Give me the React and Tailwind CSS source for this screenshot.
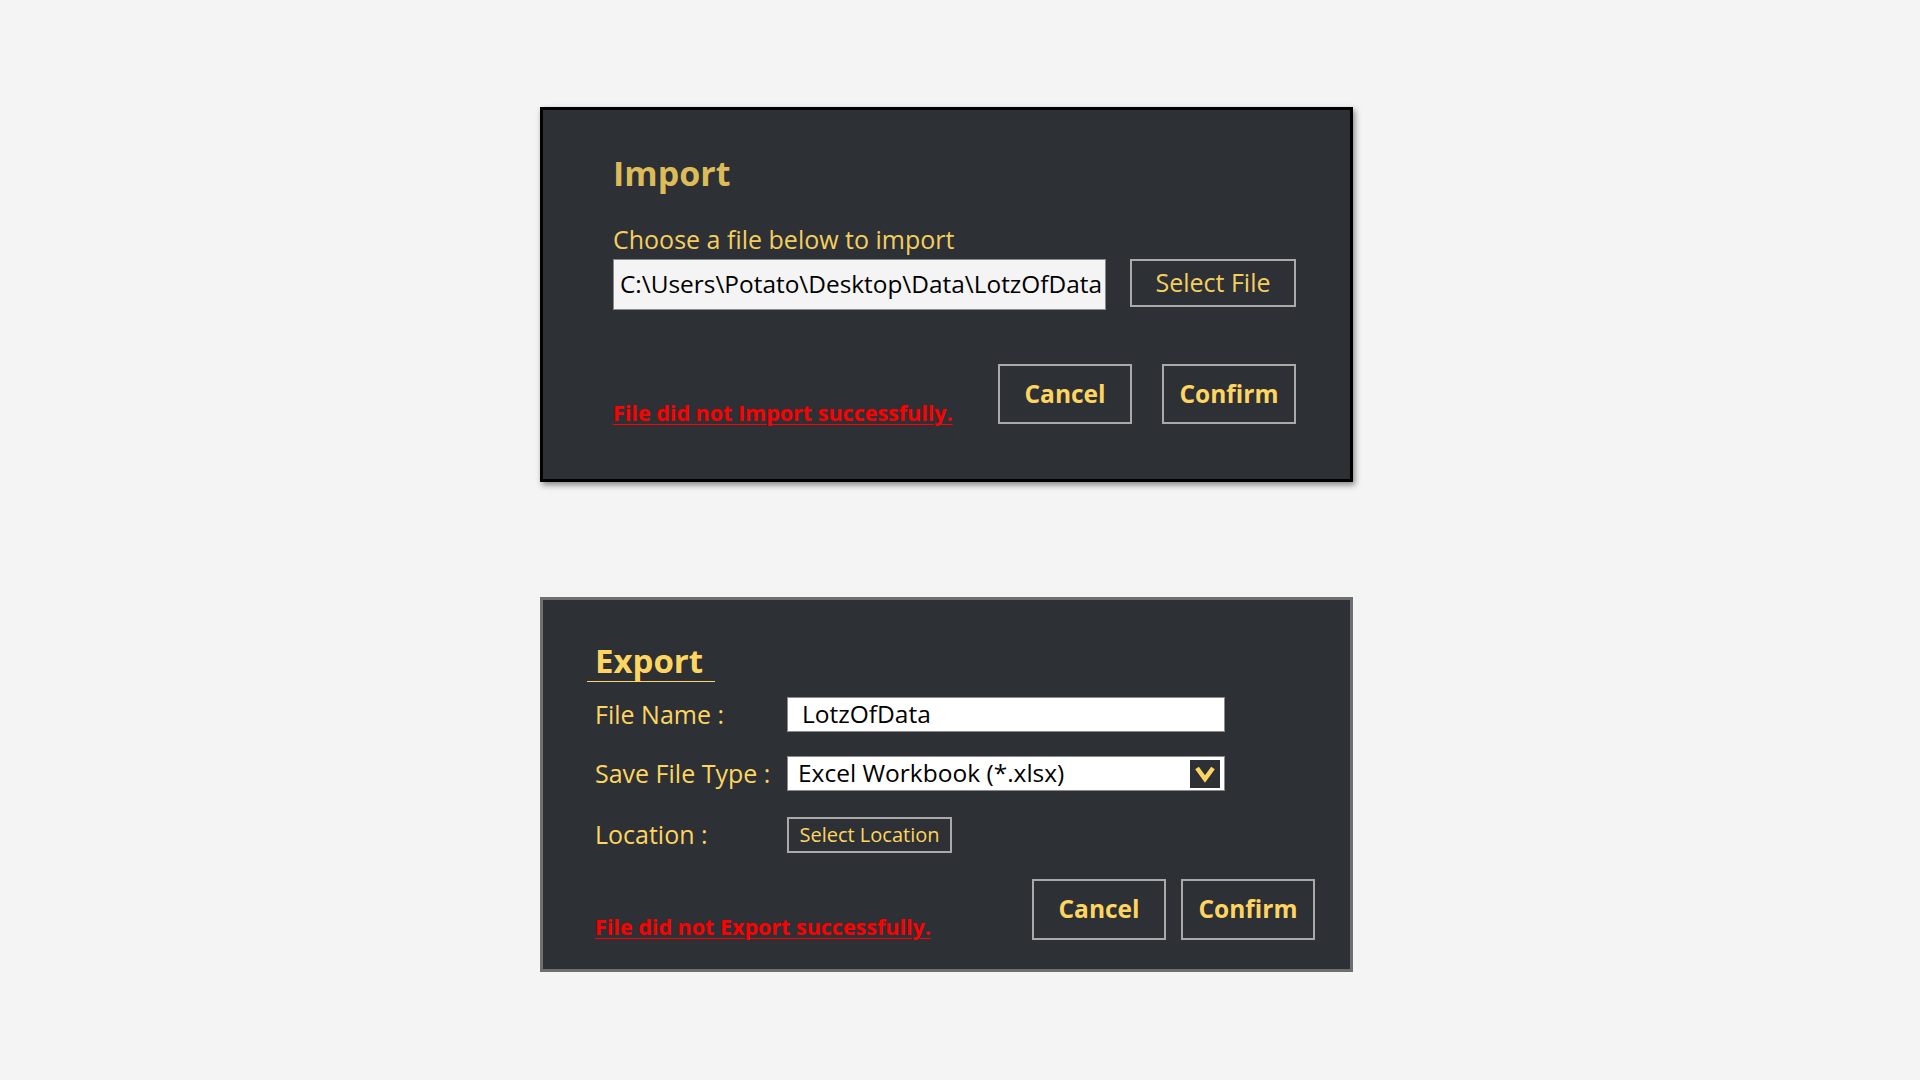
import React from "react";

const font = { fontFamily: '"Open Sans", "Noto Sans", sans-serif' };

function ChevronBox() {
  return (
    <div className="w-[30px] h-[28px] bg-[#2d3035] flex items-center justify-center">
      <svg width="22" height="18" viewBox="0 0 22 18">
        <polyline points="3,3 11,14 19,3" fill="none" stroke="#fdd560" strokeWidth="4.5" strokeLinejoin="miter" />
      </svg>
    </div>
  );
}

function ImportPanel() {
  return (
    <div className="w-[813px] h-[375px] bg-[#2d3035] border-[3px] border-black shadow-[2px_3px_6px_rgba(0,0,0,0.45)] pl-[70px] pr-[54px] pt-[40px]">
      <div className="h-[47px] leading-[47px] text-[34px] font-bold text-[#dcbc58]">Import</div>
      <div className="mt-[27px] h-[30px] leading-[30px] text-[25px] text-[#f4cf5f]">Choose a file below to import</div>
      <div className="mt-[5px] flex items-start">
        <div className="w-[493px] h-[51px] bg-[#f4f4f4] border border-[#8a8a8a] pl-[6px] flex items-center overflow-hidden whitespace-nowrap text-[24.4px] text-black">
          C:\Users\Potato\Desktop\Data\LotzOfData
        </div>
        <button className="ml-[24px] w-[166px] h-[48px] border-2 border-[#a9a9a9] text-[25px] text-[#f4cf5f] flex items-center justify-center">
          Select File
        </button>
      </div>
      <div className="mt-[54px] flex items-start">
        <div className="mt-[34px] h-[30px] leading-[30px] text-[21.5px] font-bold text-[#ff0000] underline decoration-1 underline-offset-[3px]">
          File did not Import successfully.
        </div>
        <div className="ml-auto flex gap-[30px]">
          <button className="w-[134px] h-[60px] border-2 border-[#a9a9a9] text-[24.5px] font-bold text-[#fdd560] flex items-center justify-center">Cancel</button>
          <button className="w-[134px] h-[60px] border-2 border-[#a9a9a9] text-[24.5px] font-bold text-[#fdd560] flex items-center justify-center">Confirm</button>
        </div>
      </div>
    </div>
  );
}

function ExportRow({ label, children, className }) {
  return (
    <div className={"flex items-center " + className}>
      <div className="w-[192px] text-[25px] text-[#fdd560] whitespace-nowrap">{label}</div>
      {children}
    </div>
  );
}

function ExportPanel() {
  return (
    <div className="w-[813px] h-[375px] bg-[#2d3035] border-[3px] border-[#6f6f6f] pl-[52px] pr-[35px] pt-[41px]">
      <div className="-ml-[8px] w-[128px] pl-[8px] h-[41px] leading-[40px] border-b border-[#fdd560] text-[33px] font-bold text-[#fdd560]">Export</div>
      <ExportRow label="File Name :" className="mt-[15px] h-[35px]">
        <div className="w-[438px] h-[35px] bg-white border border-[#8a8a8a] pl-[14px] flex items-center text-[24.5px] text-black">LotzOfData</div>
      </ExportRow>
      <ExportRow label="Save File Type :" className="mt-[24px] h-[35px]">
        <div className="w-[438px] h-[35px] bg-white border border-[#8a8a8a] pl-[10px] pr-[4px] flex items-center text-[24.5px] text-black">
          <span>Excel Workbook (*.xlsx)</span>
          <div className="ml-auto"><ChevronBox /></div>
        </div>
      </ExportRow>
      <ExportRow label="Location :" className="mt-[26px] h-[36px]">
        <button className="w-[165px] h-[36px] border-2 border-[#a9a9a9] text-[20px] text-[#fdd560] flex items-center justify-center">Select Location</button>
      </ExportRow>
      <div className="mt-[26px] flex items-start">
        <div className="mt-[33px] h-[30px] leading-[30px] text-[21.5px] font-bold text-[#ff0000] underline decoration-1 underline-offset-[3px]">
          File did not Export successfully.
        </div>
        <div className="ml-auto flex gap-[15px]">
          <button className="w-[134px] h-[61px] border-2 border-[#a9a9a9] text-[24.5px] font-bold text-[#fdd560] flex items-center justify-center">Cancel</button>
          <button className="w-[134px] h-[61px] border-2 border-[#a9a9a9] text-[24.5px] font-bold text-[#fdd560] flex items-center justify-center">Confirm</button>
        </div>
      </div>
    </div>
  );
}

export default function App() {
  return (
    <div className="w-[1920px] h-[1080px] bg-[#f4f4f4] pt-[107px] pl-[540px] box-border" style={font}>
      <div className="flex flex-col gap-[115px]">
        <ImportPanel />
        <ExportPanel />
      </div>
    </div>
  );
}
